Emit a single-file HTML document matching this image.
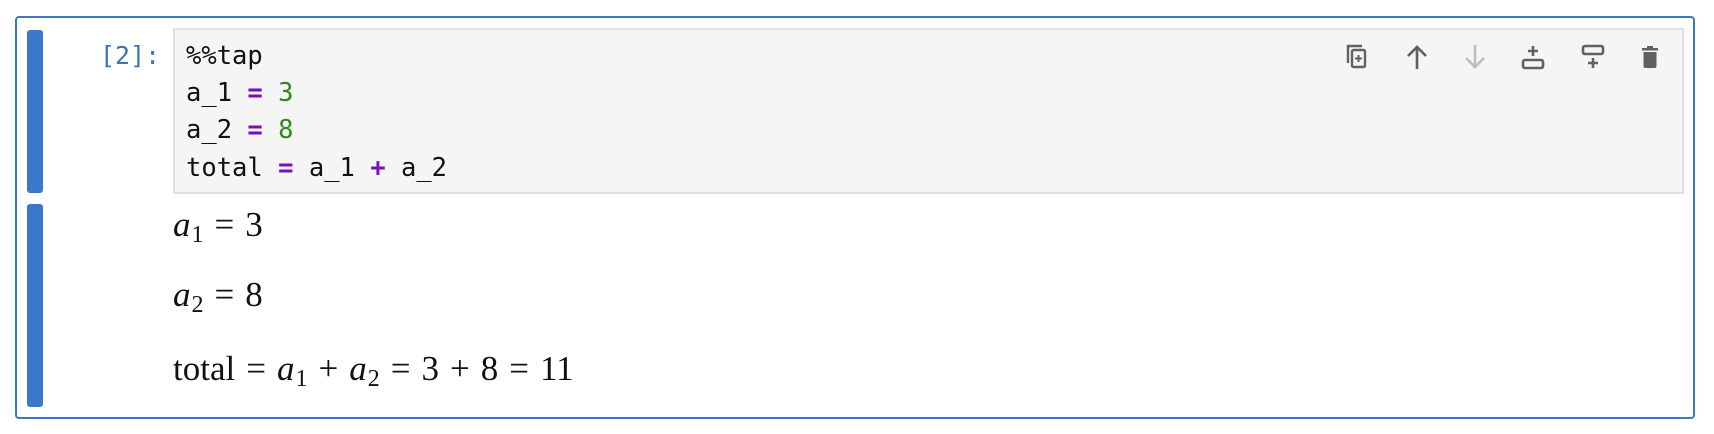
<!DOCTYPE html>
<html><head><meta charset="utf-8"><style>
*{margin:0;padding:0;box-sizing:border-box}
body{width:1714px;height:434px;background:#fff;position:relative;overflow:hidden}
.outer{position:absolute;left:15px;top:16px;width:1680px;height:403px;border:2px solid #3b78c9;border-radius:4px}
.bar{position:absolute;left:27px;width:16px;background:#3b78c9;border-radius:3px}
.prompt{position:absolute;left:100px;top:41px;font:25px/30px "DejaVu Sans Mono","Liberation Mono",monospace;color:#3d74b6}
.code{position:absolute;left:173px;top:28px;width:1511px;height:166px;background:#f5f5f5;border:2px solid #e0e0e0}
.lines{position:absolute;left:186px;top:38px;font:25.5px/37.2px "DejaVu Sans Mono","Liberation Mono",monospace;color:#111;white-space:pre}
.k{color:#7a0fc0;font-weight:bold}.n{color:#2d8a1b}
.m{position:absolute;left:173px;font:35px/40px "Liberation Serif",serif;color:#111;white-space:pre}
.m i{font-style:italic}.m sub{font-size:24px;vertical-align:-6px;margin-left:1px}
.m b{font-weight:normal;margin:0 11px}
svg{position:absolute;top:43px}
</style></head><body>
<div class="outer"></div>
<div class="bar" style="top:30px;height:163px"></div>
<div class="bar" style="top:204px;height:203px"></div>
<div class="prompt">[2]:</div>
<div class="code"></div>
<div class="lines">%%tap
a_1 <span class="k">=</span> <span class="n">3</span>
a_2 <span class="k">=</span> <span class="n">8</span>
total <span class="k">=</span> a_1 <span class="k">+</span> a_2</div>
<div class="m" style="top:205px"><i>a</i><sub>1</sub><b>=</b>3</div>
<div class="m" style="top:275px"><i>a</i><sub>2</sub><b>=</b>8</div>
<div class="m" style="top:349px">total<b>=</b><i>a</i><sub>1</sub><b>+</b><i>a</i><sub>2</sub><b>=</b>3<b>+</b>8<b>=</b>11</div>

<svg style="left:1345px" width="26" height="28" viewBox="0 0 26 28" fill="none" stroke="#616161" stroke-width="2.4"><path d="M3 20V3h14"/><rect x="7" y="7" width="13" height="17" rx="1.5"/><path d="M13.5 12v7M10 15.5h7" stroke-width="2"/></svg>
<svg style="left:1404px" width="26" height="28" viewBox="0 0 26 28" fill="none" stroke="#616161" stroke-width="2.6"><path d="M13 26V4M4 13l9-9 9 9"/></svg>
<svg style="left:1462px" width="26" height="28" viewBox="0 0 26 28" fill="none" stroke="#bdbdbd" stroke-width="2.6"><path d="M13 2v22M4 15l9 9 9-9"/></svg>
<svg style="left:1520px" width="26" height="28" viewBox="0 0 26 28" fill="none" stroke="#616161" stroke-width="2.6"><path d="M13 3v10M8 8h10"/><rect x="3" y="17" width="20" height="8" rx="2"/></svg>
<svg style="left:1580px" width="26" height="28" viewBox="0 0 26 28" fill="none" stroke="#616161" stroke-width="2.6"><rect x="3" y="3" width="20" height="8" rx="2"/><path d="M13 15v10M8 20h10"/></svg>
<svg style="left:1637px" width="26" height="28" viewBox="0 0 26 28"><path d="M5 5h16v2.5H5z M10 3h6v2h-6z" fill="#616161"/><path d="M6.5 9h13v14a2 2 0 0 1-2 2h-9a2 2 0 0 1-2-2z" fill="#616161"/></svg>
</body></html>
